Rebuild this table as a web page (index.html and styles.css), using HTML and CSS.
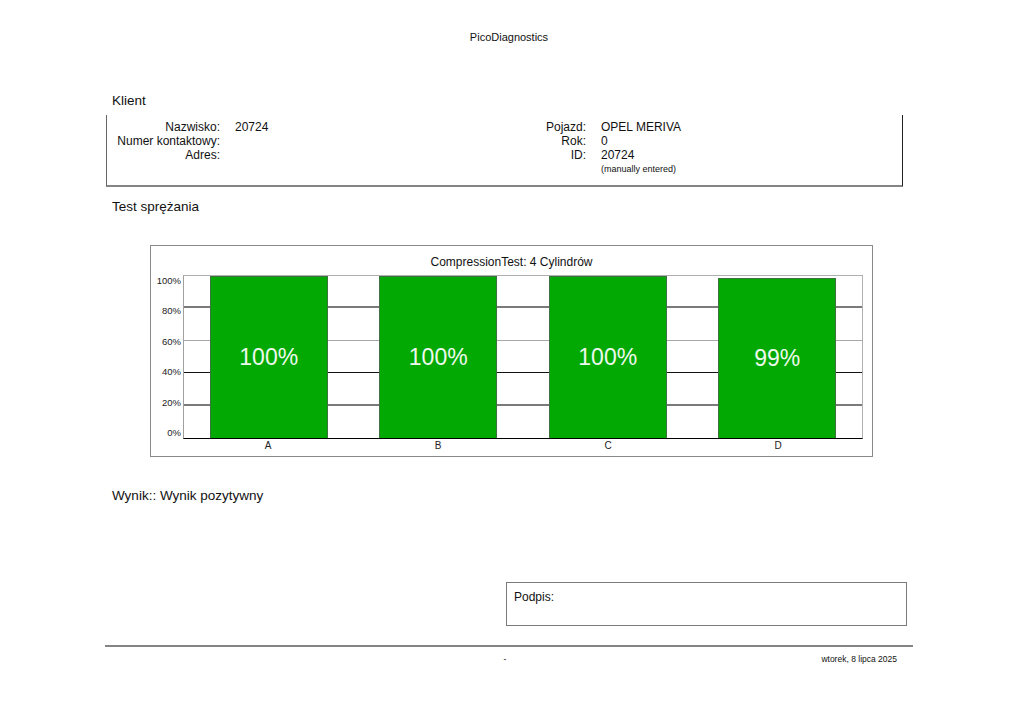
FILE: index.html
```html
<!DOCTYPE html>
<html lang="pl">
<head>
<meta charset="utf-8">
<title>PicoDiagnostics</title>
<link rel="stylesheet" href="styles.css">
</head>
<body>
<div class="page">
  <header class="doc-title">PicoDiagnostics</header>

  <h2 class="section-title klient">Klient</h2>
  <div class="client-box">
    <div class="info info-left">
      <span class="lbl">Nazwisko:</span><span class="val">20724</span>
      <span class="lbl">Numer kontaktowy:</span><span class="val"></span>
      <span class="lbl">Adres:</span><span class="val"></span>
    </div>
    <div class="info info-right">
      <span class="lbl">Pojazd:</span><span class="val">OPEL MERIVA</span>
      <span class="lbl">Rok:</span><span class="val">0</span>
      <span class="lbl">ID:</span><span class="val">20724</span>
      <span class="lbl"></span><span class="val note">(manually entered)</span>
    </div>
  </div>

  <h2 class="section-title test">Test sprężania</h2>
  <div class="chart">
    <div class="chart-title">CompressionTest: 4 Cylindrów</div>
    <div class="chart-body">
      <div class="y-axis">
        <span>100%</span><span>80%</span><span>60%</span><span>40%</span><span>20%</span><span>0%</span>
      </div>
      <div class="plot">
        <div class="gridline g-dark" style="bottom:80%"></div>
        <div class="gridline g-light" style="bottom:60%"></div>
        <div class="gridline g-black" style="bottom:40%"></div>
        <div class="gridline g-dark" style="bottom:20%"></div>
        <div class="bars">
          <div class="cat"><div class="bar" style="height:100%">100%</div></div>
          <div class="cat"><div class="bar" style="height:100%">100%</div></div>
          <div class="cat"><div class="bar" style="height:100%">100%</div></div>
          <div class="cat"><div class="bar" style="height:98.5%">99%</div></div>
        </div>
      </div>
    </div>
    <div class="x-axis">
      <span>A</span><span>B</span><span>C</span><span>D</span>
    </div>
  </div>

  <h2 class="section-title result">Wynik:: Wynik pozytywny</h2>

  <div class="signature">Podpis:</div>

  <footer class="footer">
    <span></span>
    <span class="f-mid">-</span>
    <span class="f-date">wtorek, 8 lipca 2025</span>
  </footer>
</div>
</body>
</html>
```

FILE: styles.css
```css
* { box-sizing: border-box; }

html, body {
  margin: 0;
  padding: 0;
  background: #ffffff;
}

body {
  font-family: "Liberation Sans", Arial, sans-serif;
  color: #111111;
}

.page {
  width: 1024px;
  padding-left: 105px;
}

.doc-title {
  width: 808px;
  margin-top: 30px;
  font-size: 11px;
  line-height: 14px;
  text-align: center;
}

.section-title {
  margin: 0;
  padding-left: 7px;
  font-weight: normal;
  font-size: 13.5px;
  line-height: 16px;
}

.klient { margin-top: 49px; }
.test { margin-top: 12px; }
.result { margin-top: 31px; }

/* client box */
.client-box {
  margin-top: 6px;
  margin-left: 1px;
  width: 797px;
  display: flex;
  padding: 5px 0 9px 0;
  border-left: 1px solid #666666;
  border-right: 1px solid #222222;
  border-bottom: 2px solid #858585;
  font-size: 12px;
  line-height: 14px;
}

.info {
  display: grid;
  column-gap: 15px;
  align-content: start;
}

.info-left {
  width: 400px;
  grid-template-columns: 113px auto;
}

.info-right {
  grid-template-columns: 79px auto;
}

.lbl { text-align: right; }

.note {
  font-size: 9px;
}

/* chart */
.chart {
  margin-top: 30px;
  margin-left: 45px;
  width: 723px;
  height: 212px;
  border: 1px solid #8a8a8a;
}

.chart-title {
  margin-top: 9px;
  margin-bottom: 6px;
  font-size: 12px;
  line-height: 14px;
  text-align: center;
}

.chart-body {
  display: flex;
  padding-right: 9px;
}

.y-axis {
  width: 32px;
  padding-right: 2px;
  display: flex;
  flex-direction: column;
  justify-content: space-between;
  align-items: flex-end;
  font-size: 9.5px;
  line-height: 12px;
  color: #222222;
}

.plot {
  position: relative;
  width: 680px;
  height: 164px;
  border-top: 1px solid #b0b0b0;
  border-left: 1px solid #a0a0a0;
  border-right: 1px solid #b0b0b0;
  border-bottom: 1px solid #000000;
}

.gridline {
  position: absolute;
  left: 0;
  right: 0;
  height: 0;
}

.g-dark { border-top: 2px solid #7a7a7a; }
.g-light { border-top: 1px solid #a8a8a8; }
.g-black { border-top: 1px solid #111111; }

.bars {
  position: absolute;
  inset: 0;
  display: flex;
}

.cat {
  flex: 1;
  display: flex;
  align-items: flex-end;
  justify-content: center;
}

.bar {
  width: 118px;
  background: #03a903;
  border: 1px solid #3f703f;
  border-bottom: none;
  display: flex;
  align-items: center;
  justify-content: center;
  color: #eef9ee;
  font-size: 23px;
  line-height: 1;
}

.x-axis {
  display: flex;
  margin-left: 32px;
  width: 680px;
  font-size: 10px;
  line-height: 14px;
  color: #222222;
}

.x-axis span {
  flex: 1;
  text-align: center;
}

/* signature */
.signature {
  margin-top: 78px;
  margin-left: 401px;
  width: 401px;
  height: 44px;
  border: 1px solid #7a7a7a;
  padding: 7px 0 0 7px;
  font-size: 12px;
  line-height: 14px;
}

/* footer */
.footer {
  margin-top: 19px;
  width: 808px;
  border-top: 2px solid #858585;
  padding-top: 6px;
  display: grid;
  grid-template-columns: 1fr auto 1fr;
  font-size: 8.5px;
  line-height: 12px;
}

.f-mid {
  padding-right: 8px;
}

.f-date {
  text-align: right;
  padding-right: 16px;
}
```
